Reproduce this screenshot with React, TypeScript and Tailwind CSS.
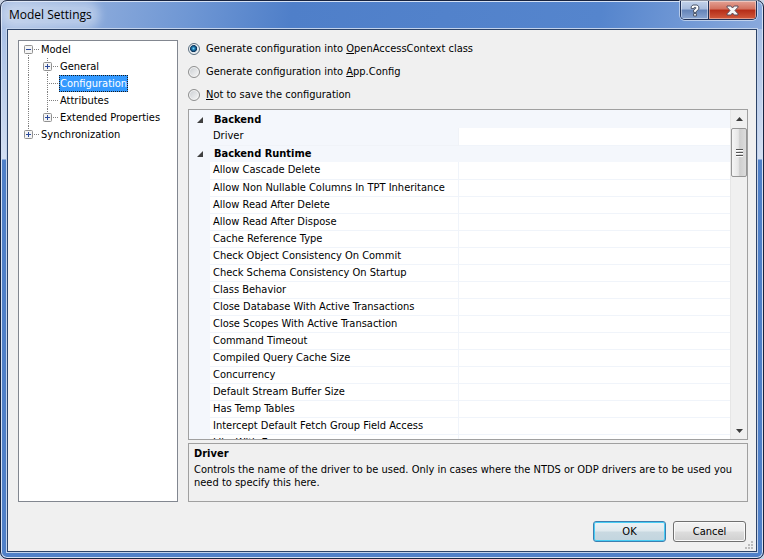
import { Fragment, ReactNode, useState } from "react"

interface ITreeItem {
    label: string,
    level: number,
    state?: 'open' | 'closed',
    last?: boolean
}

interface ICategory {
    name: string,
    items: string[]
}

const treeItems: ITreeItem[] = [
    { label: 'Model', level: 0, state: 'open' },
    { label: 'General', level: 1, state: 'closed' },
    { label: 'Configuration', level: 1 },
    { label: 'Attributes', level: 1 },
    { label: 'Extended Properties', level: 1, state: 'closed', last: true },
    { label: 'Synchronization', level: 0, state: 'closed', last: true },
]

const saveOptions: { id: string, label: ReactNode }[] = [
    { id: 'context', label: <>Generate configuration into <u>O</u>penAccessContext class</> },
    { id: 'app-config', label: <>Generate configuration into <u>A</u>pp.Config</> },
    { id: 'none', label: <><u>N</u>ot to save the configuration</> },
]

const categories: ICategory[] = [
    { name: 'Backend', items: ['Driver'] },
    {
        name: 'Backend Runtime',
        items: [
            'Allow Cascade Delete',
            'Allow Non Nullable Columns In TPT Inheritance',
            'Allow Read After Delete',
            'Allow Read After Dispose',
            'Cache Reference Type',
            'Check Object Consistency On Commit',
            'Check Schema Consistency On Startup',
            'Class Behavior',
            'Close Database With Active Transactions',
            'Close Scopes With Active Transaction',
            'Command Timeout',
            'Compiled Query Cache Size',
            'Concurrency',
            'Default Stream Buffer Size',
            'Has Temp Tables',
            'Intercept Default Fetch Group Field Access',
            'Like With Escape',
        ]
    },
]

function TitleBar() {
    return (
        <header className="flex h-7 shrink-0 items-start justify-between">
            <h1 className="mt-1.5 rounded-full bg-white/35 px-0.5 font-['Open_Sans',sans-serif] text-[12px] leading-[16px] shadow-[0_0_8px_6px_rgba(255,255,255,0.35)]">
                Model Settings
            </h1>
            <div className="flex h-[19px] overflow-hidden rounded-b-[5px] border border-t-0 border-[#1f2f55] shadow-[0_0_0_1px_rgba(255,255,255,0.5)]">
                <button aria-label="Help" className="flex w-7 items-center justify-center border-r border-[#1f2f55] bg-[linear-gradient(#c3d2ea_0%,#a7bbdc_45%,#6483b8_50%,#8ba6d2_100%)] shadow-[inset_0_0_0_1px_rgba(255,255,255,0.45)]">
                    <svg width="10" height="13" viewBox="0 0 10 13" fill="none">
                        <path d="M1.2 4.6V2.8L2.8 1H7.2L8.8 2.8V5.2L6.4 7.2V8.4H3.6V6L5.8 4.4V3.4H4.2V4.6ZM3.6 9.6H6.4V12H3.6Z" fill="#fff" stroke="#4a5468" strokeWidth="1" />
                    </svg>
                </button>
                <button aria-label="Close" className="flex w-[47px] items-center justify-center bg-[linear-gradient(#e3a295_0%,#d2705d_45%,#b52c17_50%,#d25a3c_100%)] shadow-[inset_0_0_0_1px_rgba(255,255,255,0.4)]">
                    <svg width="13" height="11" viewBox="0 0 13 11">
                        <path d="M1 1H4.8L6.5 3L8.2 1H12V2.2L9 5.5L12 8.8V10H8.2L6.5 8L4.8 10H1V8.8L4 5.5L1 2.2Z" fill="#f5f5f5" stroke="#5a4a58" strokeWidth="1" />
                    </svg>
                </button>
            </div>
        </header>
    )
}

// Dotted guide lines and the expand box in front of a tree label
function TreeGuides({ item }: { item: ITreeItem }) {
    const x = item.level === 0 ? 9 : 28
    const end = x + 12
    const first = item.level === 0 && item.state === 'open'
    return (
        <svg width={end} height="17" className="shrink-0" aria-hidden="true">
            <g stroke="#808080" strokeDasharray="1 1">
                {item.level === 1 && <path d="M9.5 0V17" />}
                <path d={`M${x + 0.5} ${first ? 8 : 0}V${item.last ? 8 : 17}`} />
                <path d={`M${x} 8.5H${end - 1}`} />
            </g>
            {item.state && (
                <g>
                    <rect x={x - 3.5} y="4.5" width="8" height="8" rx="1" fill="#f4f4f4" stroke="#919191" />
                    <path d={`M${x - 2} 8.5H${x + 3}`} stroke="#2b4a9b" />
                    {item.state === 'closed' && <path d={`M${x + 0.5} 6V11`} stroke="#2b4a9b" />}
                </g>
            )}
        </svg>
    )
}

function ModelTree() {
    const [selected, setSelected] = useState('Configuration')

    return (
        <ul role="tree" aria-label="Model sections" className="w-40 shrink-0 border border-[#828790] bg-white">
            {treeItems.map((item) => (
                <li key={item.label} role="treeitem" aria-selected={selected === item.label} className="flex h-[17px]">
                    <TreeGuides item={item} />
                    <button
                        onClick={() => setSelected(item.label)}
                        className={selected === item.label
                            ? 'border border-dotted border-[#1a1a1a] bg-[#3399ff] leading-[15px] text-white'
                            : 'border border-transparent leading-[15px]'}
                    >
                        {item.label}
                    </button>
                </li>
            ))}
        </ul>
    )
}

function SaveOptions() {
    const [option, setOption] = useState('context')

    return (
        <div className="flex flex-col gap-[6px]">
            {saveOptions.map(({ id, label }) => (
                <div key={id} className="flex h-[17px] items-center gap-1.5">
                    <input
                        type="radio"
                        name="save-option"
                        id={id}
                        checked={option === id}
                        onChange={() => setOption(id)}
                        className="size-3 appearance-none rounded-full border border-[#8e8f8f] bg-[linear-gradient(135deg,#c9cdd1,#f8f8f8)] shadow-[inset_0_0_0_1px_#f4f4f4] checked:border-[#5b6f80] checked:bg-[radial-gradient(circle_at_45%_45%,#7fd6f5_0,#1c79b0_20%,#0b2f55_42%,#dce6ec_50%)]"
                    />
                    <label htmlFor={id}>{label}</label>
                </div>
            ))}
        </div>
    )
}

function ScrollBar() {
    return (
        <div className="flex w-[17px] shrink-0 flex-col border-l border-[#e6e6e6] bg-[#f0f0f0]">
            <button aria-label="Scroll up" className="flex h-[18px] items-center justify-center">
                <svg width="7" height="4"><path d="M3.5 0L7 4H0Z" fill="#3c3c3c" /></svg>
            </button>
            <div className="flex h-[49px] flex-col items-center justify-center gap-px rounded-xs border border-[#959595] bg-[linear-gradient(90deg,#f6f6f6_0%,#e6e6e6_45%,#cfcfcf_55%,#dcdcdc_100%)]">
                <span className="h-0.5 w-[7px] border-b border-white bg-[#555]" />
                <span className="h-0.5 w-[7px] border-b border-white bg-[#555]" />
                <span className="h-0.5 w-[7px] border-b border-white bg-[#555]" />
            </div>
            <button aria-label="Scroll down" className="mt-auto flex h-[17px] items-center justify-center">
                <svg width="7" height="4"><path d="M0 0H7L3.5 4Z" fill="#3c3c3c" /></svg>
            </button>
        </div>
    )
}

function PropertyGrid() {
    const [selected, setSelected] = useState('Driver')

    return (
        <div className="flex min-h-0 flex-1 border border-[#a0a0a0] bg-white">
            <div className="min-w-0 flex-1 overflow-hidden border-t border-[#f4f7fc]">
                <table className="w-full table-fixed border-collapse text-left">
                    <colgroup>
                        <col className="w-[21px]" />
                        <col className="w-[248px]" />
                        <col />
                    </colgroup>
                    <tbody>
                        {categories.map((category) => (
                            <Fragment key={category.name}>
                                <tr className="h-[17px] bg-[#f4f7fc]">
                                    <td className="p-0">
                                        <svg width="6" height="6" className="ml-2"><path d="M6 0V6H0Z" fill="#404040" /></svg>
                                    </td>
                                    <th colSpan={2} className="p-0 pl-1 text-[11px] leading-[16px] font-bold">{category.name}</th>
                                </tr>
                                {category.items.map((item) => (
                                    <tr key={item} onClick={() => setSelected(item)} className="h-[17px]">
                                        <td className="bg-[#f4f7fc] p-0" />
                                        <td className={selected === item
                                            ? 'border-r border-b border-[#f0f3f8] bg-[#f4f7fc] p-0 pl-[3px] leading-[16px] whitespace-nowrap'
                                            : 'border-r border-b border-[#f0f4fa] p-0 pl-[3px] leading-[16px] whitespace-nowrap'}
                                        >
                                            {item}
                                        </td>
                                        <td className="border-b border-[#f0f4fa] p-0" />
                                    </tr>
                                ))}
                            </Fragment>
                        ))}
                    </tbody>
                </table>
            </div>
            <ScrollBar />
        </div>
    )
}

export default function App() {
    return (
        <div className="h-screen min-h-96 bg-[#c9d3e4] font-['DejaVu_Sans_Condensed','DejaVu_Sans',sans-serif] text-[11px] leading-[13px] text-black">
            <div className="flex h-full flex-col rounded-[7px] border border-[#17233f] bg-[linear-gradient(180deg,transparent_0,transparent_28px,#a9c0e6_28px,#d3dff2_158px,#5080c8_159px,#5080c8_100%),linear-gradient(100deg,#a5bce2_0%,#6f97d4_22%,#4f7fc9_34%,#5585cd_70%,#92afdf_92%)] px-1.5 pb-1.5 shadow-[inset_0_0_0_1px_#d5e1f4]">
                <TitleBar />
                <main className="flex min-h-0 flex-1 flex-col border border-[#2c4368] bg-[#f0f0f0] pt-2.5 pr-2 pb-[9px] pl-2.5 shadow-[0_0_0_1px_#c3d3ec]">
                    <div className="flex min-h-0 flex-1 gap-2.5">
                        <ModelTree />
                        <div className="flex min-w-0 flex-1 flex-col">
                            <SaveOptions />
                            <div className="mt-[6px] flex min-h-0 flex-1 flex-col gap-[3px]">
                                <PropertyGrid />
                                <section className="h-[59px] shrink-0 border border-[#a0a0a0] px-[5px] py-[3px]">
                                    <h2 className="mb-[3px] font-bold">Driver</h2>
                                    <p>
                                        Controls the name of the driver to be used. Only in cases where the NTDS or ODP drivers are to be used you need to specify this here.
                                    </p>
                                </section>
                            </div>
                        </div>
                    </div>
                    <footer className="mt-[19px] flex shrink-0 justify-end gap-[7px] pr-0.5">
                        <button className="h-[21px] w-[73px] rounded-[3px] border border-[#3c7fb1] bg-[linear-gradient(#edf3f6_0%,#dfe9ee_48%,#c9d9e1_52%,#c2d5df_100%)] shadow-[inset_0_0_0_1px_#48cdf4]">
                            OK
                        </button>
                        <button className="h-[21px] w-[73px] rounded-[3px] border border-[#707070] bg-[linear-gradient(#f2f2f2_0%,#ebebeb_48%,#dddddd_52%,#cfcfcf_100%)] shadow-[inset_0_0_0_1px_#fafafa]">
                            Cancel
                        </button>
                    </footer>
                </main>
                {/* Resize grip */}
                <svg width="9" height="9" className="fixed right-[10px] bottom-[9px]" aria-hidden="true">
                    <path d="M6 0h2v2h-2zM3 3h2v2h-2zM6 3h2v2h-2zM0 6h2v2h-2zM3 6h2v2h-2zM6 6h2v2h-2z" fill="#bcbcbc" />
                </svg>
            </div>
        </div>
    )
}
